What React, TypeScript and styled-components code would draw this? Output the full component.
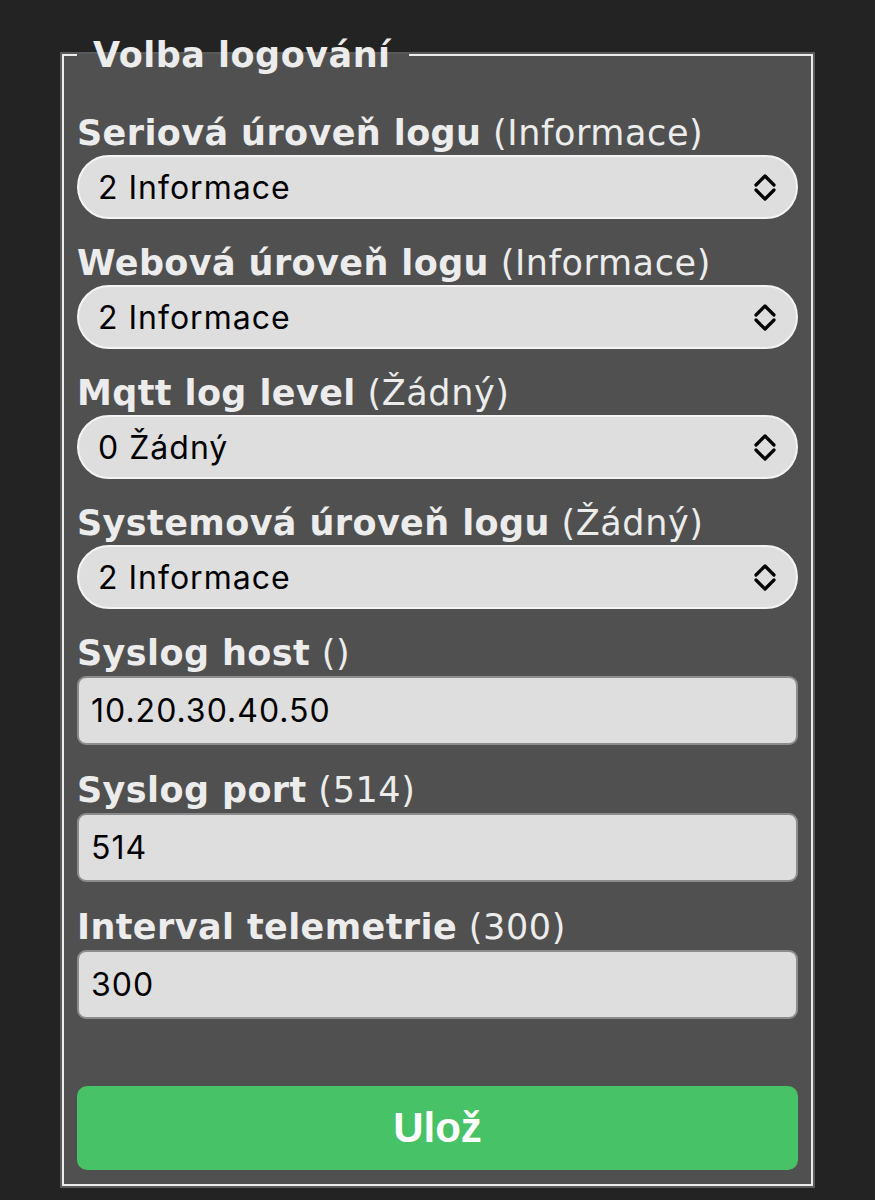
import styled, { createGlobalStyle } from 'styled-components';

const GlobalStyle = createGlobalStyle`
  html, body {
    margin: 0;
    padding: 0;
    background: #232323;
  }
`;

const Page = styled.div`
  min-height: 1200px;
  padding-top: 35px;
  box-sizing: border-box;
`;

const Panel = styled.fieldset`
  width: 751px;
  box-sizing: border-box;
  margin: 0 auto;
  min-inline-size: 0;
  border: 2px solid #ececec;
  box-shadow: 0 0 0 2px #5a5a5a;
  background: #505050;
  padding: 38px 13px 14px;
`;

const Legend = styled.legend`
  padding: 0 18px 0 16px;
  font-family: 'DejaVu Sans', Verdana, sans-serif;
  font-weight: bold;
  font-size: 35px;
  letter-spacing: 0.5px;
  line-height: 40px;
  color: #ececec;
`;

const Field = styled.div<{ $gap: number }>`
  display: flex;
  flex-direction: column;
  gap: ${(p) => p.$gap}px;
  margin-bottom: ${(p) => (p.$gap > 2 ? 25 : 24)}px;
`;

const Label = styled.label`
  font-family: 'DejaVu Sans', Verdana, sans-serif;
  font-size: 35px;
  letter-spacing: 0.6px;
  line-height: 40px;
  color: #ececec;
  white-space: nowrap;
`;

const LabelName = styled.span`
  font-weight: bold;
  letter-spacing: 0.4px;
`;

const SelectWrap = styled.div`
  position: relative;
  height: 64px;
`;

const Select = styled.select`
  appearance: none;
  width: 100%;
  height: 100%;
  box-sizing: border-box;
  border: 2px solid #f4f4f4;
  border-radius: 32px;
  background: #dedede;
  padding: 0 60px 0 19px;
  font-family: Inter, 'Noto Sans', sans-serif;
  font-size: 32px;
  letter-spacing: 1px;
  color: #000;
  outline: none;
`;

const Chevron = styled.svg`
  position: absolute;
  right: 21px;
  top: 17px;
  width: 24px;
  height: 30px;
  pointer-events: none;
`;

const Input = styled.input`
  height: 69px;
  box-sizing: border-box;
  width: 100%;
  border: 2px solid #8c8c8c;
  border-radius: 9px;
  background: #dedede;
  padding: 0 12px;
  font-family: Inter, 'Noto Sans', sans-serif;
  font-size: 32px;
  letter-spacing: 1px;
  color: #000;
  outline: none;
`;

const SaveButton = styled.button`
  display: block;
  width: 100%;
  height: 84px;
  margin-top: 67px;
  border: none;
  border-radius: 10px;
  background: #48c266;
  color: #fff;
  font-family: 'Liberation Sans', Arial, sans-serif;
  font-weight: bold;
  font-size: 42px;
`;

const levels = ['0 Žádný', '1 Chyba', '2 Informace', '3 Ladění', '4 Podrobné'];

const selects = [
  { name: 'Seriová úroveň logu', hint: 'Informace', value: '2 Informace' },
  { name: 'Webová úroveň logu', hint: 'Informace', value: '2 Informace' },
  { name: 'Mqtt log level', hint: 'Žádný', value: '0 Žádný' },
  { name: 'Systemová úroveň logu', hint: 'Žádný', value: '2 Informace' },
];

const inputs = [
  { name: 'Syslog host', hint: '', value: '10.20.30.40.50' },
  { name: 'Syslog port', hint: '514', value: '514' },
  { name: 'Interval telemetrie', hint: '300', value: '300' },
];

const UpDown = () => (
  <Chevron viewBox="0 0 24 30" fill="none" stroke="#000" strokeWidth={3.2} strokeLinecap="round" strokeLinejoin="round">
    <polyline points="3,13 12,4 21,13" />
    <polyline points="3,18 12,27 21,18" />
  </Chevron>
);

const App = () => {
  return (
    <Page>
      <GlobalStyle />
      <Panel>
        <Legend>Volba logování</Legend>
        {selects.map((s) => (
          <Field key={s.name} $gap={2}>
            <Label>
              <LabelName>{s.name}</LabelName> ({s.hint})
            </Label>
            <SelectWrap>
              <Select defaultValue={s.value}>
                {levels.map((l) => (
                  <option key={l}>{l}</option>
                ))}
              </Select>
              <UpDown />
            </SelectWrap>
          </Field>
        ))}
        {inputs.map((f) => (
          <Field key={f.name} $gap={3}>
            <Label>
              <LabelName>{f.name}</LabelName> ({f.hint})
            </Label>
            <Input defaultValue={f.value} />
          </Field>
        ))}
        <SaveButton>Ulož</SaveButton>
      </Panel>
    </Page>
  );
};

export default App;
